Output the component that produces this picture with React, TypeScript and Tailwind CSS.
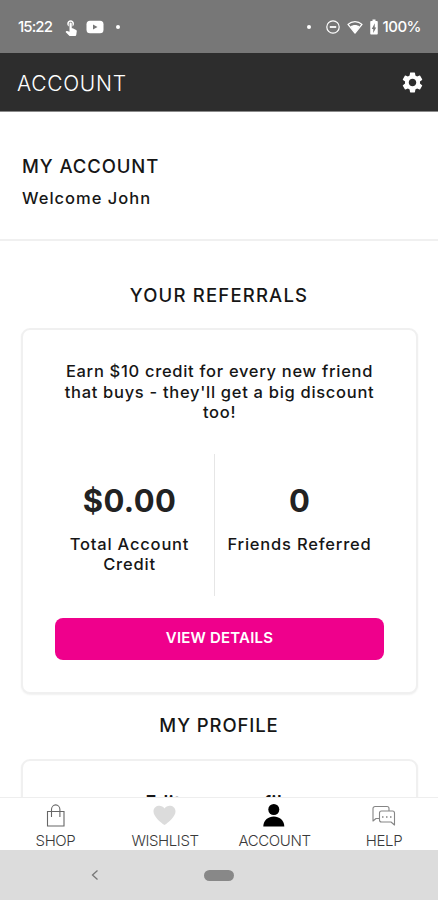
import type { ReactNode } from 'react'
import { MdSettings, MdTouchApp, MdBatteryChargingFull } from 'react-icons/md'

function StatusBar() {
  return (
    <div className="flex h-[53px] shrink-0 items-center bg-[#777777] pl-[18px] pr-[17px] text-white">
      <span className="text-[15px] font-medium leading-5 tracking-[-0.9px]">15:22</span>
      <MdTouchApp className="ml-[10px] size-[18px]" />
      <svg viewBox="0 0 18 14" className="ml-[6px] h-[14px] w-[18px]">
        <rect x="0.5" y="0.8" width="17" height="12.4" rx="3.5" fill="currentColor" />
        <path d="M7 4.5v5l4.5-2.5z" fill="#777777" />
      </svg>
      <span className="ml-[12px] size-1 rounded-full bg-white" />

      <span className="ml-auto size-1 rounded-full bg-white" />
      <svg viewBox="0 0 14 14" className="ml-[15px] size-[14px]" fill="none" stroke="currentColor" strokeWidth="1.2">
        <circle cx="7" cy="7" r="6.2" />
        <path d="M3.8 7h6.4" strokeWidth="1.8" />
      </svg>
      <svg viewBox="0 0 16 14" className="ml-[7px] h-[14px] w-4">
        <path d="M1 4.4C5 0.6 11 0.6 15 4.4L8 13z" fill="none" stroke="currentColor" strokeWidth="1.3" strokeLinejoin="round" />
        <path d="M3.4 6.6C6 4.6 10 4.6 12.6 6.6L8 13z" fill="currentColor" />
      </svg>
      <MdBatteryChargingFull className="ml-[2px] size-[18px]" />
      <span className="text-[15px] font-medium leading-5 tracking-[-0.5px]">100%</span>
    </div>
  )
}

function Header() {
  return (
    <header className="flex h-[59px] shrink-0 items-center justify-between border-b border-[#8a8a8a] bg-[#2d2d2d] pl-[17px] pr-[13px] text-white">
      <h1 className="pt-[3px] text-[21px] font-light leading-7 tracking-[0.7px]">ACCOUNT</h1>
      <MdSettings className="size-[25px]" />
    </header>
  )
}

function Card({ children, className = '' }: { children: ReactNode; className?: string }) {
  return (
    <div className={`ml-[21px] mr-5 rounded-[9px] border-2 border-[#f0f0f0] bg-white shadow-[0_1px_2px_rgba(0,0,0,0.06)] ${className}`}>
      {children}
    </div>
  )
}

function Referrals() {
  return (
    <section>
      <h2 className="pt-[42px] text-center text-[18.5px] font-[450] leading-6 tracking-[1.2px]">YOUR REFERRALS</h2>
      <Card className="mt-[21px] h-[366px] px-8 pt-[31px]">
        <p className="text-center text-[16.5px] font-[450] leading-[20.5px] tracking-[0.7px]">
          Earn $10 credit for every new friend
          <br />
          that buys - they'll get a big discount
          <br />
          too!
        </p>
        <div className="mt-[31px] flex h-[142px] text-center">
          <div className="w-[160px] border-r border-[#e6e6e6] pr-[10px] pt-[29px]">
            <div className="text-[31px] font-bold leading-9 tracking-[0.4px] text-[#222]">$0.00</div>
            <div className="mt-[15px] text-[16.5px] font-[450] leading-[20.5px] tracking-[0.8px]">
              Total Account
              <br />
              Credit
            </div>
          </div>
          <div className="flex-1 pt-[29px]">
            <div className="text-[31px] font-bold leading-9 text-[#222]">0</div>
            <div className="mt-[15px] whitespace-nowrap text-[16.5px] font-[450] leading-[20.5px] tracking-[0.8px]">Friends Referred</div>
          </div>
        </div>
        <button className="mt-[22px] h-[42px] w-full rounded-[8px] bg-[#ef008c] text-[15px] font-semibold tracking-[0.2px] text-white">
          VIEW DETAILS
        </button>
      </Card>
    </section>
  )
}

function Profile() {
  return (
    <section>
      <h2 className="pt-[19px] text-center text-[18.5px] font-[450] leading-6 tracking-[0.9px]">MY PROFILE</h2>
      <Card className="mt-[22px] h-[200px] px-8 pt-[32px]">
        <p className="text-center text-[18px] font-semibold leading-[20.5px] tracking-[0.6px]">Edit your profile</p>
      </Card>
    </section>
  )
}

function Tab({ label, children, className }: { label: string; children: ReactNode; className: string }) {
  return (
    <div className={`flex flex-col items-center pt-[5px] ${className}`}>
      {children}
      <span className="mt-[5px] text-[15px] font-light leading-[18px] tracking-[-0.4px]">{label}</span>
    </div>
  )
}

function TabBar() {
  return (
    <nav className="flex h-[53px] shrink-0 border-t border-[#eeeeee] bg-white text-[#3a3a3a]">
      <Tab label="SHOP" className="w-[111px]">
        <svg viewBox="0 0 24 24" className="size-6" fill="none" stroke="#666" strokeWidth="1.1">
          <path d="M3.5 8.5H20V23H3.5z" />
          <path d="M7.5 14V6.5a4.2 4.6 0 0 1 8.4 0V14" />
        </svg>
      </Tab>
      <Tab label="WISHLIST" className="w-[108px]">
        <svg viewBox="0 0 24 24" className="size-6" fill="#dcdcdc">
          <path d="M11.500 22C7.500 19.500 0.500 13.500 0.500 8.500C0.500 2.300 8.500 1 11.500 5.500C14.500 1 22.500 2.300 22.500 8.500C22.500 13.500 15.500 19.500 11.500 22z" />
        </svg>
      </Tab>
      <Tab label="ACCOUNT" className="w-[111px]">
        <svg viewBox="0 0 24 24" className="size-6" fill="#000">
          <circle cx="10.8" cy="6.5" r="5.5" />
          <path d="M0.300 23.500C0.300 10 21.300 10 21.300 23.500z" />
        </svg>
      </Tab>
      <Tab label="HELP" className="w-[108px]">
        <svg viewBox="0 0 24 24" className="size-6" fill="none" stroke="#858585" strokeWidth="1.1" strokeLinejoin="round">
          <path d="M17 8V5.500a2 2 0 0 0-2-2H3a2 2 0 0 0-2 2V18l3-2.500H7" />
          <path d="M9.500 8h11a2 2 0 0 1 2 2v12l-3.500-3H9.500a2 2 0 0 1-2-2v-7a2 2 0 0 1 2-2z" />
          <path d="M10 14h1.500M14 14h1.500M18 14h1.500" strokeWidth="1.5" />
        </svg>
      </Tab>
    </nav>
  )
}

function SystemNav() {
  return (
    <div className="flex h-[50px] shrink-0 items-center bg-[#dcdcdc] pl-[91px]">
      <svg viewBox="0 0 8 10" className="h-[10px] w-2" fill="none" stroke="#777" strokeWidth="1.3">
        <path d="M6.5 0.5L1.5 5l5 4.5" />
      </svg>
      <span className="ml-[105px] h-[11px] w-[30px] rounded-full bg-[#888]" />
    </div>
  )
}

export default function App() {
  return (
    <div className="flex h-[900px] w-[438px] flex-col overflow-hidden bg-white font-['Inter',sans-serif] text-[#161616]">
      <StatusBar />
      <Header />
      <main className="min-h-0 flex-1 overflow-hidden">
        <section className="h-[129px] border-b-2 border-[#f0f0f0] pl-[22px] pt-[42px]">
          <h2 className="text-[18.5px] font-[450] leading-6 tracking-[0.9px]">MY ACCOUNT</h2>
          <p className="mt-[10px] text-[16.5px] font-[450] leading-5 tracking-[1px]">Welcome John</p>
        </section>
        <Referrals />
        <Profile />
      </main>
      <TabBar />
      <SystemNav />
    </div>
  )
}
